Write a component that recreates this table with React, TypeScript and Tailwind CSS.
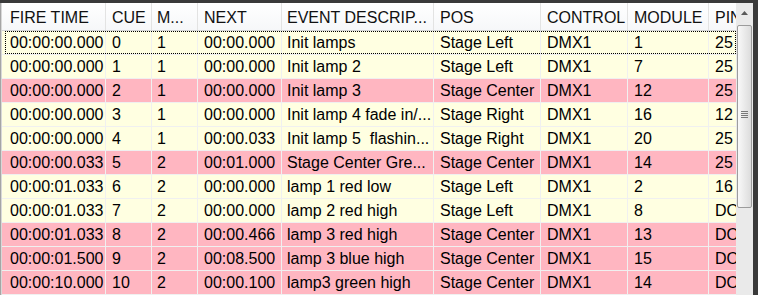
import React from "react";

type Row = { c: string[]; pink: boolean };

const rows: Row[] = [
  { c: ["00:00:00.000", "0", "1", "00:00.000", "Init lamps", "Stage Left", "DMX1", "1", "25"], pink: false },
  { c: ["00:00:00.000", "1", "1", "00:00.000", "Init lamp 2", "Stage Left", "DMX1", "7", "25"], pink: false },
  { c: ["00:00:00.000", "2", "1", "00:00.000", "Init lamp 3", "Stage Center", "DMX1", "12", "25"], pink: true },
  { c: ["00:00:00.000", "3", "1", "00:00.000", "Init lamp 4 fade in/...", "Stage Right", "DMX1", "16", "12"], pink: false },
  { c: ["00:00:00.000", "4", "1", "00:00.033", "Init lamp 5  flashin...", "Stage Right", "DMX1", "20", "25"], pink: false },
  { c: ["00:00:00.033", "5", "2", "00:01.000", "Stage Center Gre...", "Stage Center", "DMX1", "14", "25"], pink: true },
  { c: ["00:00:01.033", "6", "2", "00:00.000", "lamp 1 red low", "Stage Left", "DMX1", "2", "16"], pink: false },
  { c: ["00:00:01.033", "7", "2", "00:00.000", "lamp 2 red high", "Stage Left", "DMX1", "8", "DO"], pink: false },
  { c: ["00:00:01.033", "8", "2", "00:00.466", "lamp 3 red high", "Stage Center", "DMX1", "13", "DO"], pink: true },
  { c: ["00:00:01.500", "9", "2", "00:08.500", "lamp 3 blue high", "Stage Center", "DMX1", "15", "DO"], pink: true },
  { c: ["00:00:10.000", "10", "2", "00:00.100", "lamp3 green high", "Stage Center", "DMX1", "14", "DO"], pink: true },
];

const headers = ["FIRE TIME", "CUE", "M...", "NEXT", "EVENT DESCRIP...", "POS", "CONTROL", "MODULE", "PIN"];
const widths = ["w-[104px]", "w-[46px]", "w-[46px]", "w-[84px]", "w-[152px]", "w-[107px]", "w-[87px]", "w-[81px]", "w-[60px]"];
const pads = ["pl-[8px]", "pl-[6px]", "pl-[5px]", "pl-[6px]", "pl-[5px]", "pl-[6px]", "pl-[6px]", "pl-[6px]", "pl-[6px]"];

export default function App() {
  return (
    <div className="w-[758px] h-[295px] bg-[#3a3a3a] pt-[3px] overflow-hidden font-['Liberation_Sans',Arial,sans-serif] text-[16px] text-black">
      <div className="flex h-[292px]">
        <div className="w-[2px] bg-[#a5a5a5] border-r border-[#d8d8d8]" />
        <div className="w-[734px] flex flex-col overflow-hidden bg-white">
          <div className="flex h-[28px] shrink-0 bg-gradient-to-b from-white to-[#f6f7f9] border-b border-[#d5d5d5]">
            {headers.map((h, i) => (
              <div
                key={i}
                className={`${widths[i]} ${pads[i]} shrink-0 flex items-center pt-[3px] whitespace-nowrap overflow-hidden border-r border-[#e3e3e3] text-[#111]`}
              >
                {h}
              </div>
            ))}
          </div>
          {rows.map((r, ri) => (
            <div
              key={ri}
              className={`relative flex h-[24px] shrink-0 border-b border-[#f0f0f0] ${r.pink ? "bg-[#ffb6c1]" : "bg-[#ffffe1]"}`}
            >
              {r.c.map((t, i) => (
                <div
                  key={i}
                  className={`${widths[i]} ${pads[i]} shrink-0 flex items-center whitespace-pre overflow-hidden border-r border-[#f0f0f0]`}
                >
                  {t}
                </div>
              ))}
              {ri === 0 && (
                <div className="absolute left-[3px] top-0 right-0 bottom-0 border border-dotted border-black pointer-events-none" />
              )}
            </div>
          ))}
        </div>
        <div className="w-[17px] bg-[#eaeaea] flex flex-col">
          <div className="h-[20px] flex items-center justify-center">
            <svg width="7" height="4" viewBox="0 0 7 4">
              <path d="M0 4 L3.5 0 L7 4 Z" fill="#5a5a5a" />
            </svg>
          </div>
          <div className="mt-[2px] h-[183px] mx-[1px] rounded-[2px] border border-[#9c9c9c] bg-gradient-to-r from-[#f9f9f9] to-[#dcdcdc] flex items-center justify-center">
            <div className="flex flex-col gap-[1px] mt-[-4px]">
              <div className="w-[7px] h-[1px] bg-[#7a7a7a]" />
              <div className="w-[7px] h-[1px] bg-[#7a7a7a]" />
              <div className="w-[7px] h-[1px] bg-[#7a7a7a]" />
              <div className="w-[7px] h-[1px] bg-[#7a7a7a]" />
            </div>
          </div>
        </div>
      </div>
    </div>
  );
}
